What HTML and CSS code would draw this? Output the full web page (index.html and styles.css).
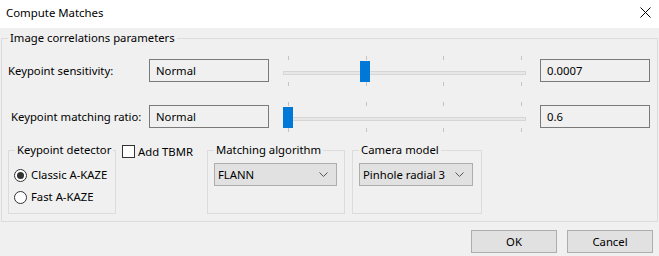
FILE: index.html
```html
<!DOCTYPE html>
<html>
<head>
<meta charset="utf-8">
<link rel="stylesheet" href="styles.css">
</head>
<body>
<div class="titlebar">
  <span class="title">Compute Matches</span>
  <svg class="close" width="11" height="11" viewBox="0 0 11 11"><path d="M0.5 0.5L10.5 10.5M10.5 0.5L0.5 10.5" stroke="#000" stroke-width="1"/></svg>
</div>
<div class="content">
  <div class="group outer">
    <div class="legend">Image correlations parameters</div>
    <div class="row">
      <div class="label l1">Keypoint sensitivity:</div>
      <div class="textbox">Normal</div>
      <div class="slider">
        <div class="ticks"><i></i><i></i><i></i><i></i></div>
        <div class="groove"></div>
        <div class="ticks bottom"><i></i><i></i><i></i><i></i></div>
        <div class="thumb" style="left:77px"></div>
      </div>
      <div class="textbox value">0.0007</div>
    </div>
    <div class="row row2">
      <div class="label l2">Keypoint matching ratio:</div>
      <div class="textbox">Normal</div>
      <div class="slider">
        <div class="ticks"><i></i><i></i><i></i><i></i></div>
        <div class="groove"></div>
        <div class="ticks bottom"><i></i><i></i><i></i><i></i></div>
        <div class="thumb" style="left:0px"></div>
      </div>
      <div class="textbox value">0.6</div>
    </div>
    <div class="bottom-row">
      <div class="group small kd">
        <div class="legend">Keypoint detector</div>
        <div class="radios">
          <div class="radio"><span class="circle checked"></span>Classic A-KAZE</div>
          <div class="radio"><span class="circle"></span>Fast A-KAZE</div>
        </div>
      </div>
      <div class="check"><span class="box"></span>Add TBMR</div>
      <div class="group small ma">
        <div class="legend">Matching algorithm</div>
        <div class="combo w1"><span>FLANN</span><svg width="9" height="5" viewBox="0 0 9 5"><path d="M0.5 0.5L4.5 4.5L8.5 0.5" fill="none" stroke="#555" stroke-width="1"/></svg></div>
      </div>
      <div class="group small cm">
        <div class="legend">Camera model</div>
        <div class="combo w2"><span>Pinhole radial 3</span><svg width="9" height="5" viewBox="0 0 9 5"><path d="M0.5 0.5L4.5 4.5L8.5 0.5" fill="none" stroke="#555" stroke-width="1"/></svg></div>
      </div>
    </div>
  </div>
  <div class="buttons">
    <div class="button">OK</div>
    <div class="button">Cancel</div>
  </div>
</div>
</body>
</html>
```
FILE: styles.css
```css
* { box-sizing: border-box; }
html, body { margin: 0; padding: 0; }
body {
  width: 659px;
  height: 256px;
  background: #f0f0f0;
  font-family: "Noto Sans", "Open Sans", sans-serif;
  font-size: 11.3px;
  line-height: 14px;
  color: #000;
  overflow: hidden;
}
.titlebar {
  height: 28px;
  background: #fff;
  display: flex;
  align-items: center;
  justify-content: space-between;
  padding: 0 8px 0 6px;
}
.title { font-size: 11.4px; line-height: 28px; margin-top: -2px; }
.close { display: block; margin-top: -3px; }

.content { padding: 10px 0 0 1px; }

.group {
  border: 1px solid #dcdcdc;
}
.outer {
  width: 657px;
  height: 184px;
}
.legend {
  display: block;
  width: fit-content;
  white-space: nowrap;
  margin: -8px 0 0 6px;
  padding: 0 2px;
  background: #f0f0f0;
  line-height: 14px;
  height: 14px;
}
.row {
  display: flex;
  align-items: flex-start;
  height: 32px;
  margin-top: 10px;
}
.row2 { margin-top: 14px; }
.label {
  width: 147px;
  line-height: 23px;
  margin-top: 4px;
  white-space: nowrap;
}
.l1 { padding-left: 6px; }
.l2 { padding-left: 9px; }
.textbox {
  width: 120px;
  height: 23px;
  margin-top: 4px;
  border: 1px solid #7a7a7a;
  background: #f0f0f0;
  line-height: 21px;
  padding-left: 6px;
  white-space: nowrap;
}
.slider {
  position: relative;
  width: 243px;
  height: 32px;
  margin-left: 14px;
  display: flex;
  flex-direction: column;
}
.ticks {
  display: flex;
  justify-content: space-between;
  padding: 0 4px 0 5px;
  height: 4px;
  margin-top: 1px;
}
.ticks i {
  display: block;
  width: 1px;
  height: 4px;
  background: #c4c4c4;
}
.groove {
  margin-top: 11px;
  height: 4px;
  border: 1px solid #d6d6d6;
  background: #e7e7e7;
}
.ticks.bottom { margin-top: 7px; }
.thumb {
  position: absolute;
  top: 6px;
  width: 10px;
  height: 21px;
  background: #0078d7;
}
.value {
  width: 110px;
  margin-left: 14px;
}

.bottom-row {
  display: flex;
  align-items: flex-start;
  margin-top: 10px;
  padding-left: 6px;
}
.small {
  margin-top: 7px;
  height: 64px;
}
.kd { width: 108px; }
.ma { width: 138px; }
.cm { width: 130px; margin-left: 7px; }
.radios { margin-top: 7px; padding-left: 5px; }
.radio {
  display: flex;
  align-items: center;
  height: 22px;
  white-space: nowrap;
}
.circle {
  width: 13px;
  height: 13px;
  border: 1px solid #333;
  border-radius: 50%;
  background: #fff;
  margin-right: 4px;
  display: flex;
  align-items: center;
  justify-content: center;
}
.circle.checked::after {
  content: "";
  width: 7px;
  height: 7px;
  border-radius: 50%;
  background: #333;
}
.check {
  width: 85px;
  margin-left: 6px;
  display: flex;
  align-items: center;
  margin-top: 1px;
  height: 15px;
  white-space: nowrap;
}
.box {
  width: 13px;
  height: 13px;
  border: 1px solid #333;
  background: #fff;
  margin-right: 3px;
}
.combo {
  display: flex;
  align-items: center;
  justify-content: space-between;
  margin: 6px 0 0 6px;
  height: 23px;
  border: 1px solid #adadad;
  background: #e1e1e1;
  padding: 0 8px 0 3px;
  white-space: nowrap;
}
.combo svg { display: block; }
.w1 { width: 123px; }
.w2 { width: 114px; }

.buttons {
  display: flex;
  justify-content: flex-end;
  gap: 10px;
  padding-right: 6px;
  margin-top: 8px;
}
.button {
  width: 86px;
  height: 23px;
  border: 1px solid #adadad;
  background: #e1e1e1;
  text-align: center;
  line-height: 21px;
}
```
